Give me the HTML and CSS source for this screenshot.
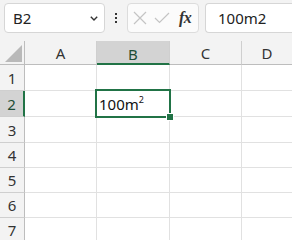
FILE: index.html
```html
<!DOCTYPE html>
<html>
<head>
<meta charset="utf-8">
<link rel="stylesheet" href="styles.css">
</head>
<body>
<div class="toolbar">
  <div class="namebox"><span class="name">B2</span>
    <svg class="chev" width="8" height="5" viewBox="0 0 8 5"><path d="M0.8 0.8 L4 4 L7.2 0.8" fill="none" stroke="#333" stroke-width="1.4"/></svg>
  </div>
  <div class="kebab"><i></i><i></i><i></i></div>
  <div class="btnbox">
    <svg class="ic" width="14" height="14" viewBox="0 0 14 14"><path d="M1 1 L13 13 M13 1 L1 13" stroke="#c4c4c4" stroke-width="1.2"/></svg>
    <svg class="ic" width="16" height="14" viewBox="0 0 16 14"><path d="M1 7 L5.5 11.5 L15 2" fill="none" stroke="#c4c4c4" stroke-width="1.2"/></svg>
    <span class="fx">fx</span>
  </div>
  <div class="formula">100m2</div>
</div>
<div class="sheet">
  <div class="corner"><div class="tri"></div></div>
  <div class="ch">A</div>
  <div class="ch sel">B</div>
  <div class="ch">C</div>
  <div class="ch last">D</div>

  <div class="rh r1">1</div><div class="c r1"></div><div class="c r1"></div><div class="c r1"></div><div class="c r1 last"></div>
  <div class="rh r1 sel">2</div><div class="c r1"></div><div class="c r1 active"><span>100m<sup>2</sup></span><i class="handle"></i></div><div class="c r1"></div><div class="c r1 last"></div>
  <div class="rh r1">3</div><div class="c r1"></div><div class="c r1"></div><div class="c r1"></div><div class="c r1 last"></div>
  <div class="rh">4</div><div class="c"></div><div class="c"></div><div class="c"></div><div class="c last"></div>
  <div class="rh">5</div><div class="c"></div><div class="c"></div><div class="c"></div><div class="c last"></div>
  <div class="rh">6</div><div class="c"></div><div class="c"></div><div class="c"></div><div class="c last"></div>
  <div class="rh">7</div><div class="c"></div><div class="c"></div><div class="c"></div><div class="c last"></div>
</div>
</body>
</html>
```
FILE: styles.css
```css
* { box-sizing: border-box; }
html, body { margin: 0; padding: 0; }
body {
  width: 292px;
  height: 240px;
  overflow: hidden;
  background: #ffffff;
  font-family: "Noto Sans", "Liberation Sans", sans-serif;
  color: #262626;
}
.toolbar {
  height: 41px;
  background: #f3f3f3;
  display: flex;
  align-items: flex-start;
  padding: 3px 0 0 4px;
}
.namebox {
  width: 101px;
  height: 30px;
  background: #fff;
  border: 1px solid #d6d6d6;
  border-radius: 4px;
  display: flex;
  align-items: center;
  justify-content: space-between;
  padding: 0 6px 0 8px;
}
.name { font-size: 15px; color: #222; }
.chev { margin-top: 1px; }
.kebab {
  width: 22px;
  height: 30px;
  display: flex;
  flex-direction: column;
  align-items: center;
  justify-content: center;
  gap: 2px;
}
.kebab i { display: block; width: 2px; height: 2px; background: #333; }
.btnbox {
  width: 72px;
  height: 30px;
  background: #fbfbfb;
  border: 1px solid #dcdcdc;
  border-radius: 4px;
  display: flex;
  align-items: center;
  padding-left: 5px;
  gap: 7px;
}
.fx {
  font-family: "Liberation Serif", serif;
  font-style: italic;
  font-weight: bold;
  font-size: 16px;
  color: #333;
  margin-left: 2px;
  letter-spacing: -0.5px;
}
.formula {
  margin-left: 6px;
  flex: 1;
  height: 30px;
  background: #fff;
  border: 1px solid #d6d6d6;
  border-right: none;
  border-radius: 4px 0 0 4px;
  padding-left: 12px;
  display: flex;
  align-items: center;
  font-size: 15px;
  color: #222;
}
.sheet {
  display: grid;
  grid-template-columns: 25px 72px 73px 72px 1fr;
  grid-template-rows: 24px 26px 26px 26px 25px 25px 25px 25px;
}
.corner {
  background: #f3f3f3;
  border-right: 1px solid #bdbdbd;
  border-bottom: 1px solid #bdbdbd;
  position: relative;
}
.tri {
  position: absolute;
  right: 2px;
  bottom: 2px;
  width: 0;
  height: 0;
  border-left: 17px solid transparent;
  border-bottom: 17px solid #b9b9b9;
}
.ch {
  background: #f3f3f3;
  border-right: 1px solid #cfcfcf;
  border-bottom: 1px solid #bdbdbd;
  display: flex;
  align-items: center;
  justify-content: center;
  font-size: 15px;
  color: #333;
  padding-top: 1px;
}
.ch.last { border-right: none; }
.ch.sel {
  background: #d3d3d3;
  border-bottom: 2px solid #217346;
  color: #1e4d36;
  padding-top: 3px;
}
.rh {
  background: #f3f3f3;
  border-right: 1px solid #bdbdbd;
  border-bottom: 1px solid #cfcfcf;
  display: flex;
  align-items: center;
  justify-content: center;
  font-size: 15px;
  color: #333;
}
.rh.sel {
  background: #d3d3d3;
  border-right: 2px solid #217346;
  color: #1e4d36;
}
.c {
  border-right: 1px solid #e1e1e1;
  border-bottom: 1px solid #e1e1e1;
}
.c.last { border-right: none; }
.c.active {
  position: relative;
  display: flex;
  align-items: center;
  padding-left: 2px;
  font-size: 15px;
  color: #111;
}
.c.active::before {
  content: "";
  position: absolute;
  left: -2px;
  top: -2px;
  right: -2px;
  bottom: -2px;
  border: 2px solid #217346;
  pointer-events: none;
}
.c.active sup { font-size: 9px; vertical-align: 7px; line-height: 0; }
.handle {
  position: absolute;
  right: -4px;
  bottom: -4px;
  width: 6px;
  height: 6px;
  background: #217346;
  outline: 1px solid #fff;
}
```
